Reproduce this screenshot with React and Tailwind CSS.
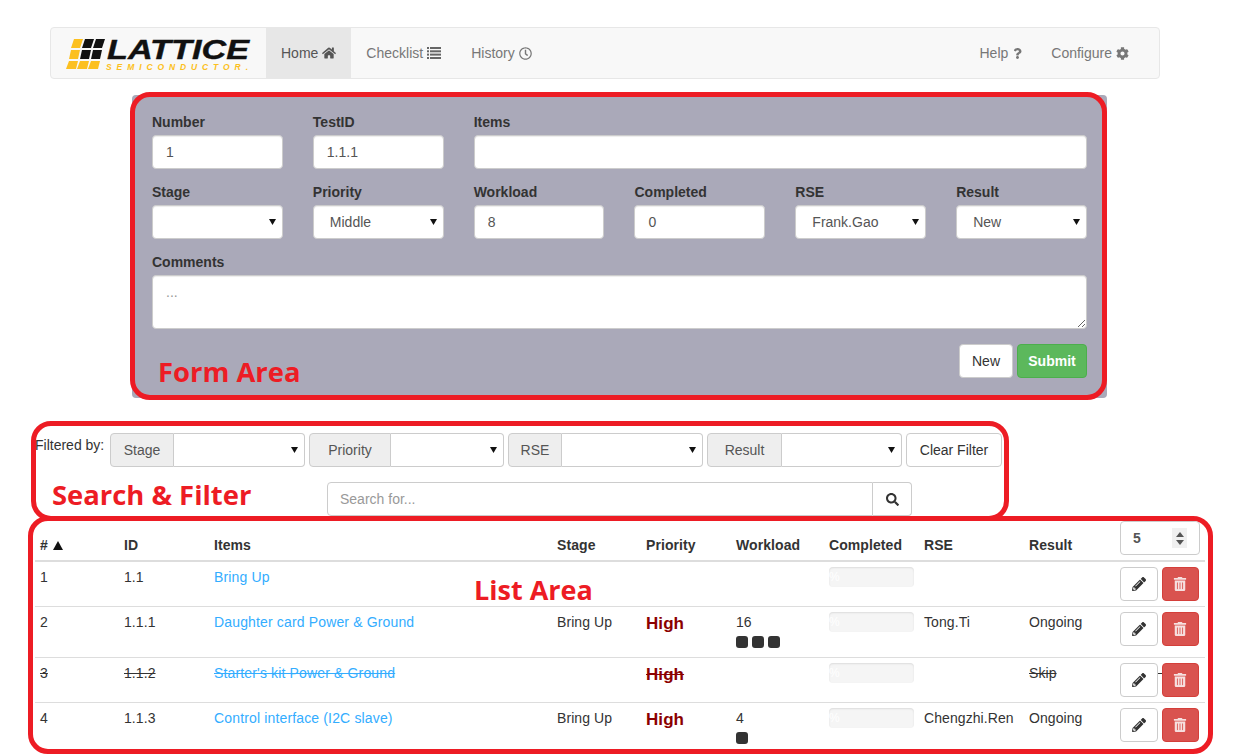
import React from 'react';
import { FaHome, FaRegClock, FaQuestion, FaCog, FaSearch, FaPencilAlt, FaTrashAlt } from 'react-icons/fa';

const inputClass = 'h-[34px] w-full rounded-[4px] border border-[#ccc] bg-white px-[13px] text-[14px] text-[#555] shadow-[inset_0_1px_1px_rgba(0,0,0,0.075)] outline-none';

const Arrow = () => (
  <svg className="pointer-events-none absolute right-[7px] top-[14px]" width="7" height="6" viewBox="0 0 7 6">
    <polygon points="0,0 7,0 3.5,6" fill="#111" />
  </svg>
);

const ListIcon = () => (
  <svg width="14" height="12" viewBox="0 0 14 12" fill="#666">
    <rect x="0" y="0" width="2" height="2" />
    <rect x="3" y="0" width="11" height="2" />
    <rect x="0" y="3.3" width="2" height="2" />
    <rect x="3" y="3.3" width="11" height="2" />
    <rect x="0" y="6.6" width="2" height="2" />
    <rect x="3" y="6.6" width="11" height="2" />
    <rect x="0" y="10" width="2" height="2" />
    <rect x="3" y="10" width="11" height="2" />
  </svg>
);

const Select = ({ value = '', options = [] }) => (
  <div className="relative w-full">
    <select defaultValue={value} className={`${inputClass} appearance-none pl-4`}>
      <option value=""></option>
      {options.map((o) => <option key={o} value={o}>{o}</option>)}
    </select>
    <Arrow />
  </div>
);

const Field = ({ label, className = '', children }) => (
  <div className={className}>
    <label className="mb-[3px] block text-[14px] font-bold leading-5 text-[#333]">{label}</label>
    {children}
  </div>
);

const FilterGroup = ({ label, addonWidth }) => (
  <div className="relative flex h-[34px] w-[195px]">
    <span className={`${addonWidth} flex shrink-0 items-center justify-center rounded-l-[4px] border border-[#ccc] bg-[#eee] text-[14px] text-[#555]`}>{label}</span>
    <select className="h-[34px] min-w-0 flex-1 appearance-none rounded-r-[4px] border border-l-0 border-[#ccc] bg-white px-3 text-[14px] text-[#555] outline-none">
      <option value=""></option>
    </select>
    <Arrow />
  </div>
);

const NavLink = ({ label, icon, active }) => (
  <a href="#" className={active ? 'flex h-full items-center gap-1 bg-[#e7e7e7] px-[15px] text-[14px] text-[#555]' : 'flex h-full items-center gap-1 px-[15px] text-[14px] text-[#777]'}>
    {label} {icon}
  </a>
);

const Logo = () => (
  <svg className="ml-[9px]" width="195" height="45" viewBox="60 30 195 45">
    <polygon points="74,38 83,38 80,47 71,47" fill="#fcc020" />
    <polygon points="85,38 94,38 91,47 82,47" fill="#111" />
    <polygon points="96,38 105,38 102,47 93,47" fill="#111" />
    <polygon points="71,49 80,49 78,58 69,58" fill="#fcc020" />
    <polygon points="82,49 91,49 89,58 80,58" fill="#111" />
    <polygon points="93,49 102,49 100,58 91,58" fill="#111" />
    <polygon points="69,60 78,60 76,68 66,68" fill="#fcc020" />
    <polygon points="80,60 89,60 87,68 77,68" fill="#fcc020" />
    <polygon points="91,60 100,60 98,68 88,68" fill="#fcc020" />
    <text x="107" y="58" fontSize="28" fontWeight="700" fontStyle="italic" fontFamily="Liberation Sans" textLength="142" lengthAdjust="spacingAndGlyphs" fill="#111" stroke="#111" strokeWidth="0.4">LATTICE</text>
    <text x="106" y="68.5" fontSize="8.5" fontWeight="700" fontStyle="italic" fontFamily="Liberation Sans" textLength="142" fill="#fcc020">SEMICONDUCTOR.</text>
  </svg>
);

const rows = [
  { n: '1', id: '1.1', item: 'Bring Up' },
  { n: '2', id: '1.1.1', item: 'Daughter card Power & Ground', stage: 'Bring Up', high: true, work: '16', dots: 3, rse: 'Tong.Ti', result: 'Ongoing' },
  { n: '3', id: '1.1.2', item: "Starter's kit Power & Ground", high: true, result: 'Skip', skip: true },
  { n: '4', id: '1.1.3', item: 'Control interface (I2C slave)', stage: 'Bring Up', high: true, work: '4', dots: 1, rse: 'Chengzhi.Ren', result: 'Ongoing' },
];

const headers = ['ID', 'Items', 'Stage', 'Priority', 'Workload', 'Completed', 'RSE', 'Result'];
const widths = ['w-[84px]', 'w-[90px]', 'w-[343px]', 'w-[89px]', 'w-[90px]', 'w-[93px]', 'w-[95px]', 'w-[105px]', 'w-[91px]', 'w-[90px]'];

const Row = ({ row }) => {
  const td = row.skip
    ? 'border-b border-[#ddd] p-[5px] align-top leading-5 line-through'
    : 'border-b border-[#ddd] p-[5px] align-top leading-5';
  return (
    <tr>
      <td className={td}>{row.n}</td>
      <td className={td}>{row.id}</td>
      <td className={td}>
        <a href="#" className={row.skip ? 'inline-block tracking-[0.15px] text-[#33adff] line-through' : 'inline-block tracking-[0.15px] text-[#33adff]'}>{row.item}</a>
      </td>
      <td className={td}>{row.stage}</td>
      <td className={td}>
        {row.high && (
          <span className={row.skip ? 'mt-[2px] inline-block text-[17px] font-bold text-[#8b0000] line-through' : 'mt-[2px] inline-block text-[17px] font-bold text-[#8b0000]'}>High</span>
        )}
      </td>
      <td className={td}>
        {row.work && <div>{row.work}</div>}
        {row.dots && (
          <div className="mb-1 mt-1 flex gap-1">
            {Array.from({ length: row.dots }).map((_, i) => (
              <span key={i} className="h-3 w-3 rounded-[3px] bg-[#333]"></span>
            ))}
          </div>
        )}
      </td>
      <td className={td}>
        <span className="inline-block h-5 w-[85px] rounded-[4px] bg-[#f5f5f5] align-top text-[12px] leading-5 text-white shadow-[inset_0_1px_2px_rgba(0,0,0,0.1)]">%</span>
      </td>
      <td className={td}>{row.rse}</td>
      <td className={td}>{row.result}</td>
      <td className={td}>
        <button className="inline-flex h-[34px] w-[38px] items-center justify-center rounded-[4px] border border-[#ccc] bg-white align-top text-[14px] text-[#333]"><FaPencilAlt /></button>
        {' '}
        <button className="inline-flex h-[34px] w-[37px] items-center justify-center rounded-[4px] border border-[#d43f3a] bg-[#d9534f] align-top text-[14px] text-[#f6e0df]"><FaTrashAlt /></button>
      </td>
    </tr>
  );
};

const App = () => {
  return (
    <div className="h-[754px] w-[1239px] overflow-hidden bg-white pt-[27px] font-['Liberation_Sans',Arial,sans-serif] text-[14px] text-[#333]">

      {/* Navbar */}
      <nav className="ml-[50px] flex h-[52px] w-[1110px] items-center rounded-[4px] border border-[#e7e7e7] bg-[#f8f8f8]">
        <div className="w-[215px] shrink-0"><Logo /></div>
        <NavLink label="Home" icon={<FaHome />} active />
        <NavLink label="Checklist" icon={<ListIcon />} />
        <NavLink label="History" icon={<FaRegClock className="text-[13px]" />} />
        <div className="ml-auto mr-[15px] flex h-full">
          <NavLink label="Help" icon={<FaQuestion className="-mr-[2px] text-[11px]" />} />
          <NavLink label="Configure" icon={<FaCog className="text-[13px]" />} />
        </div>
      </nav>

      {/* Form area */}
      <div className="relative ml-[132px] mt-[16px] h-[303px] w-[975px] rounded-[4px] bg-[#aaa9b9] px-5 pt-[17px]">
        <div className="grid grid-cols-6 gap-x-[30px] gap-y-[13px]">
          <Field label="Number"><input className={inputClass} defaultValue="1" /></Field>
          <Field label="TestID"><input className={inputClass} defaultValue="1.1.1" /></Field>
          <Field label="Items" className="col-span-4"><input className={inputClass} /></Field>
          <Field label="Stage"><Select /></Field>
          <Field label="Priority"><Select value="Middle" options={['Middle']} /></Field>
          <Field label="Workload"><input className={inputClass} defaultValue="8" /></Field>
          <Field label="Completed"><input className={inputClass} defaultValue="0" /></Field>
          <Field label="RSE"><Select value="Frank.Gao" options={['Frank.Gao']} /></Field>
          <Field label="Result"><Select value="New" options={['New']} /></Field>
          <Field label="Comments" className="col-span-6">
            <textarea className={`${inputClass} block h-[54px] py-[6px] placeholder:text-[#999]`} placeholder="..."></textarea>
          </Field>
        </div>
        <div className="mt-[15px] flex items-start justify-between">
          <span className="ml-[6px] mt-[11px] font-['Open_Sans',sans-serif] text-[27.4px] font-bold leading-[34px] text-[#ed1c24]">Form Area</span>
          <div className="flex gap-1">
            <button className="h-[34px] w-[54px] rounded-[4px] border border-[#ccc] bg-white text-[14px] text-[#333]">New</button>
            <button className="h-[34px] w-[70px] rounded-[4px] border border-[#4cae4c] bg-[#5cb85c] text-[14px] font-bold text-white">Submit</button>
          </div>
        </div>
        {/* Red annotation outline */}
        <div className="pointer-events-none absolute -bottom-[2px] -left-[2px] -top-[3px] right-0 rounded-[20px] border-[5px] border-[#ed1c24]"></div>
      </div>

      {/* Search & filter */}
      <div className="ml-[31px] mt-[23px] h-[100px] w-[978px] rounded-[20px] border-[5px] border-[#ed1c24] pt-[7px]">
        <div className="flex gap-1">
          <span className="-ml-px mt-[2px] w-[71px] whitespace-nowrap leading-5 text-[#333]">Filtered by:</span>
          <FilterGroup label="Stage" addonWidth="w-[64px]" />
          <FilterGroup label="Priority" addonWidth="w-[82px]" />
          <FilterGroup label="RSE" addonWidth="w-[54px]" />
          <FilterGroup label="Result" addonWidth="w-[75px]" />
          <button className="h-[34px] w-[96px] rounded-[4px] border border-[#ccc] bg-white text-[14px] text-[#333]">Clear Filter</button>
        </div>
        <div className="mt-[15px] flex">
          <span className="ml-4 w-[275px] whitespace-nowrap font-['Open_Sans',sans-serif] text-[27.4px] font-bold leading-[26px] text-[#ed1c24]">Search &amp; Filter</span>
          <div className="flex h-[34px] w-[585px]">
            <input className="h-[34px] min-w-0 flex-1 rounded-l-[4px] border border-[#ccc] bg-white px-3 text-[14px] outline-none placeholder:text-[#999]" placeholder="Search for..." />
            <button className="flex h-[34px] w-[39px] items-center justify-center rounded-r-[4px] border border-l-0 border-[#ccc] bg-white text-[13px] text-[#333]"><FaSearch /></button>
          </div>
        </div>
      </div>

      {/* List area */}
      <div className="relative z-10 -mt-[5px] ml-[28px] h-[238px] w-[1185px] overflow-hidden rounded-[20px] border-[5px] border-[#ed1c24] pl-[2px]">
        <table className="w-[1170px] table-fixed border-separate border-spacing-0 text-[14px] tracking-[0.08px]">
          <colgroup>
            {widths.map((w) => <col key={w} className={w} />)}
          </colgroup>
          <thead>
            <tr>
              <th className="border-b-2 border-[#ddd] px-[5px] pb-[5px] text-left align-bottom font-bold leading-5">
                <span className="flex items-center gap-[5px]">
                  #
                  <svg width="10" height="9" viewBox="0 0 10 9"><polygon points="0,9 10,9 5,0" fill="#111" /></svg>
                </span>
              </th>
              {headers.map((h) => (
                <th key={h} className="border-b-2 border-[#ddd] px-[5px] pb-[5px] text-left align-bottom font-bold leading-5">{h}</th>
              ))}
              <th className="border-b-2 border-[#ddd] px-[5px] pb-[5px] align-bottom">
                <div className="relative h-[34px] w-[80px]">
                  <input className="h-[34px] w-full rounded-[4px] border border-[#ccc] bg-white px-3 text-[14px] font-bold text-[#555] outline-none" defaultValue="5" />
                  <div className="absolute left-[52px] top-[7px] flex h-5 w-[15px] flex-col items-center justify-center gap-[3px] bg-[#f0f0f0]">
                    <svg width="8" height="5" viewBox="0 0 8 5"><polygon points="0,5 8,5 4,0" fill="#555" /></svg>
                    <svg width="8" height="5" viewBox="0 0 8 5"><polygon points="0,0 8,0 4,5" fill="#555" /></svg>
                  </div>
                </div>
              </th>
            </tr>
          </thead>
          <tbody>
            {rows.map((row) => <Row key={row.n} row={row} />)}
          </tbody>
        </table>
        <span className="absolute left-[441px] top-[52px] font-['Open_Sans',sans-serif] text-[27px] font-bold leading-[34px] text-[#ed1c24]">List Area</span>
      </div>

    </div>
  );
};

export default App;
